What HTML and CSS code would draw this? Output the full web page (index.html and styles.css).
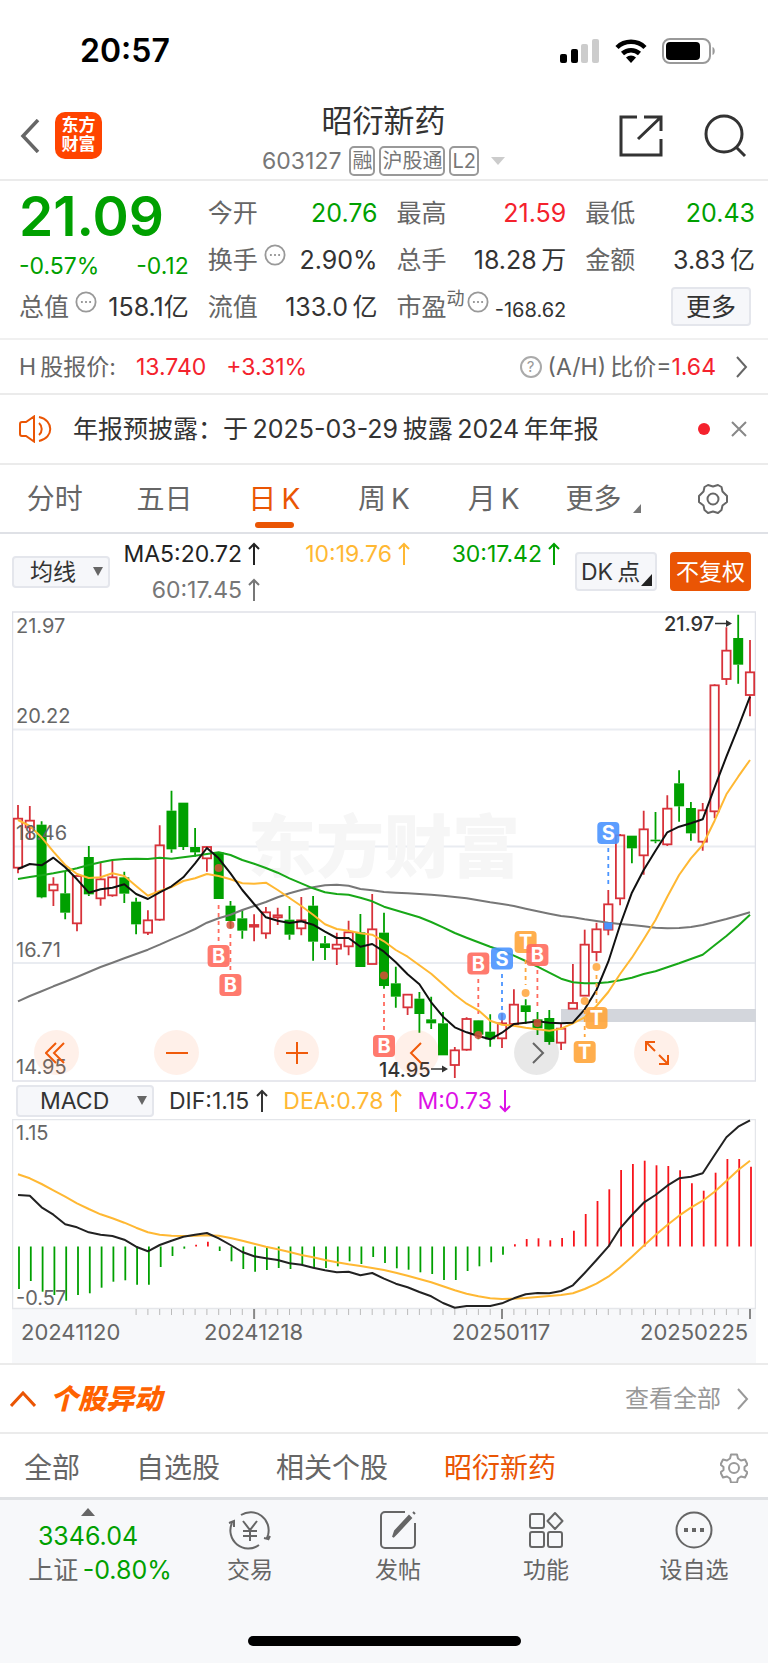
FILE: index.html
```html
<!DOCTYPE html>
<html lang="zh-CN">
<head>
<meta charset="utf-8">
<meta name="viewport" content="width=device-width, initial-scale=1">
<title>昭衍新药 603127</title>
<link rel="stylesheet" href="styles.css">
</head>
<body>
<svg class="defs" aria-hidden="true">
  <symbol id="up" viewBox="0 0 12 24"><path d="M6 23V2M1 7l5-5 5 5"/></symbol>
  <symbol id="down" viewBox="0 0 12 24"><path d="M6 1v21M1 17l5 5 5-5"/></symbol>
  <symbol id="next" viewBox="0 0 14 24"><path d="M2 2l9 10-9 10"/></symbol>
  <symbol id="info" viewBox="0 0 24 24"><circle cx="12" cy="12" r="10.5"/><path d="M6.5 12h2M11 12h2M15.500 12h2" stroke-width="2"/></symbol>
</svg>

<div class="status">
  <span class="clock">20:57</span>
  <span class="status-icons">
    <svg width="40" height="26" viewBox="0 0 40 26"><rect x="0" y="16" width="7" height="9" rx="2"/><rect x="11" y="11" width="7" height="14" rx="2"/><rect x="21" y="6" width="7" height="19" rx="2" fill="#ccc"/><rect x="32" y="1" width="7" height="24" rx="2" fill="#ccc"/></svg>
    <svg width="34" height="26" viewBox="0 0 34 26"><path d="M17 25l-5-5.500a7.500 7.500 0 0 1 10 0z"/><path d="M3 9.500a20 20 0 0 1 28 0M8.500 15.500a12.500 12.500 0 0 1 17 0" fill="none" stroke="#000" stroke-width="4.500"/></svg>
    <svg width="54" height="26" viewBox="0 0 54 26"><rect x="1" y="1" width="47" height="24" rx="7" fill="none" stroke="#999" stroke-width="2"/><rect x="4" y="4" width="34" height="18" rx="4"/><path d="M50.500 9c3 1 3 7 0 8z" fill="#999"/></svg>
  </span>
</div>

<header class="header">
  <div class="header-left">
    <button class="icon-btn" aria-label="返回"><svg width="20" height="34" viewBox="0 0 20 34" fill="none" stroke="#666" stroke-width="3.500"><path d="M18 1L3 17l15 16"/></svg></button>
    <a class="logo" href="#">东方<br>财富</a>
  </div>
  <div class="title-box">
    <h1>昭衍新药</h1>
    <div class="code"><span>603127</span><span class="tag">融</span><span class="tag">沪股通</span><span class="tag">L2</span><i class="caret"></i></div>
  </div>
  <div class="header-right">
    <button class="icon-btn" aria-label="分享"><svg width="44" height="44" viewBox="0 0 44 44" fill="none" stroke="#333" stroke-width="3"><path d="M18 3H2v38h40V25M25 3h17v14M42 3L19 25"/></svg></button>
    <button class="icon-btn" aria-label="搜索"><svg width="44" height="44" viewBox="0 0 44 44" fill="none" stroke="#333" stroke-width="3"><circle cx="21" cy="20" r="18"/><path d="M33 33l9 9"/></svg></button>
  </div>
</header>

<section class="quote">
  <div class="price down">21.09</div>
  <div class="item"><span>今开</span><b class="down">20.76</b></div>
  <div class="item"><span>最高</span><b class="rise">21.59</b></div>
  <div class="item"><span>最低</span><b class="down">20.43</b></div>
  <div class="item change down"><b>-0.57%</b><b>-0.12</b></div>
  <div class="item"><span>换手<svg class="info"><use href="#info"/></svg></span><b>2.90%</b></div>
  <div class="item"><span>总手</span><b>18.28&thinsp;万</b></div>
  <div class="item"><span>金额</span><b>3.83&thinsp;亿</b></div>
  <div class="item"><span>总值<svg class="info"><use href="#info"/></svg></span><b>158.1亿</b></div>
  <div class="item"><span>流值</span><b>133.0&thinsp;亿</b></div>
  <div class="item"><span>市盈<sup>动</sup><svg class="info"><use href="#info"/></svg></span><b class="small">-168.62</b></div>
  <div class="item end"><button class="more">更多</button></div>
</section>

<section class="hshare">
  <span>H&thinsp;股报价:</span><b>13.740</b><b>+3.31%</b>
  <a class="ratio" href="#"><span class="help">?</span><span>(A/H)&thinsp;比价=<em>1.64</em></span><svg class="next"><use href="#next"/></svg></a>
</section>

<section class="notice">
  <svg width="34" height="28" viewBox="0 0 34 28" fill="none" stroke="#ea5504" stroke-width="2"><path d="M15 1.500v25L7 21H3a2 2 0 0 1-2-2V9a2 2 0 0 1 2-2h4zM20 8a8 8 0 0 1 0 12M20 2c15 3 15 21 0 24"/></svg>
  <a href="#">年报预披露：于&thinsp;2025-03-29&thinsp;披露&thinsp;2024&thinsp;年年报</a>
  <i class="dot"></i>
  <button class="icon-btn" aria-label="关闭"><svg width="18" height="18" viewBox="0 0 18 18" fill="none" stroke="#888" stroke-width="2"><path d="M2 2l14 14M16 2L2 16"/></svg></button>
</section>

<nav class="periods">
  <button>分时</button><button>五日</button><button class="active">日&thinsp;K</button><button>周&thinsp;K</button><button>月&thinsp;K</button><button>更多<i class="corner"></i></button>
  <button aria-label="设置"><svg width="32" height="32" viewBox="0 0 32 32" fill="none" stroke="#666" stroke-width="2"><path d="M11 2l5 1.500L21 2l3.500 2 1 4.500L30 13v6l-4.500 3.500-1 4.500L21 30l-5-1.500L11 30l-3.500-3-1-4.500L2 19v-6l4.500-4.500 1-4.500z" stroke-linejoin="round"/><circle cx="16" cy="16" r="5.500"/></svg></button>
</nav>

<section class="legend">
  <button class="pill">均线<i class="tri"></i></button>
  <div class="averages">
    <span>MA5:20.72<svg><use href="#up"/></svg></span>
    <span class="amber">10:19.76<svg><use href="#up"/></svg></span>
    <span class="down">30:17.42<svg><use href="#up"/></svg></span>
    <span class="grey">60:17.45<svg><use href="#up"/></svg></span>
  </div>
  <button class="pill tall">DK&thinsp;点<i class="corner dark"></i></button>
  <button class="solid">不复权</button>
</section>

<section class="chart">
  <svg id="kline" viewBox="12 611 744 471" role="img" aria-label="日K线图"></svg>
  <div class="controls">
    <button aria-label="快退"><svg viewBox="0 0 24 24"><path d="M11 2L1 12l10 10M19 2L9 12l10 10"/></svg></button>
    <button aria-label="缩小"><svg viewBox="0 0 24 24"><path d="M1 12h22"/></svg></button>
    <button aria-label="放大"><svg viewBox="0 0 24 24"><path d="M1 12h22M12 1v22"/></svg></button>
    <button aria-label="左移"><svg viewBox="0 0 24 24"><path d="M16 2L6 12l10 10"/></svg></button>
    <button class="muted" aria-label="右移"><svg viewBox="0 0 24 24"><path d="M8 2l10 10L8 22"/></svg></button>
    <button aria-label="全屏"><svg viewBox="0 0 24 24"><path d="M1 10V1h9M1 1l9 9M23 14v9h-9M23 23l-9-9"/></svg></button>
  </div>
</section>

<section class="macd-head">
  <button class="pill wide">MACD<i class="tri"></i></button>
  <span>DIF:1.15<svg><use href="#up"/></svg></span>
  <span class="amber">DEA:0.78<svg><use href="#up"/></svg></span>
  <span class="magenta">M:0.73<svg><use href="#down"/></svg></span>
</section>
<section class="chart">
  <svg id="macd" viewBox="12 1119 744 244" role="img" aria-label="MACD"></svg>
</section>

<section class="moves">
  <svg width="26" height="16" viewBox="0 0 26 16" fill="none" stroke="#ea5504" stroke-width="3"><path d="M1 15L13 2l12 13"/></svg>
  <h2>个股异动</h2>
  <a href="#">查看全部<svg class="next"><use href="#next"/></svg></a>
</section>
<nav class="filters">
  <button>全部</button><button>自选股</button><button>相关个股</button><button class="active">昭衍新药</button>
  <button class="gear" aria-label="设置"><svg width="28" height="30" viewBox="0 0 28 30" fill="none" stroke="#999" stroke-width="2"><path d="M11 1.500h6l1 4 3 2 4-1 2.500 5-3 2.500v3l3 2.500-2.500 5-4-1-3 2-1 4h-6l-1-4-3-2-4 1-2.500-5 3-2.500v-3l-3-2.500L3 6.500l4 1 3-2z" stroke-linejoin="round"/><circle cx="14" cy="15" r="5"/></svg></button>
</nav>

<footer class="footer">
  <div class="bottom">
    <a class="index" href="#"><i class="tri-up"></i><b class="down">3346.04</b><span>上证&thinsp;<b class="down">-0.80%</b></span></a>
    <a href="#"><svg width="44" height="40" viewBox="0 0 44 40"><path d="M13 5a18 18 0 0 1 27 20l-1 3M40 30l2-4M40 29l-4-1M31 35A18 18 0 0 1 4 13M1 13l5-2v6M15 11l7 9 7-9M22 20v11M15 21h14M15 26h14"/></svg>交易</a>
    <a href="#"><svg width="40" height="40" viewBox="0 0 40 40"><path d="M27 2H7a4 4 0 0 0-4 4v28a4 4 0 0 0 4 4h26a4 4 0 0 0 4-4V13"/><path d="M15 27l2-6L31 6l2 2-14 15zM35 2l2 2" fill="#666"/></svg>发帖</a>
    <a href="#"><svg width="36" height="40" viewBox="0 0 36 40"><rect x="2" y="4" width="14" height="14" rx="2"/><rect x="2" y="22" width="14" height="15" rx="2"/><rect x="20" y="22" width="14" height="15" rx="2"/><path d="M27 3l7.500 8-7.500 8-7.500-8z" stroke-linejoin="round"/></svg>功能</a>
    <a href="#"><svg width="40" height="40" viewBox="0 0 40 40"><circle cx="20" cy="20" r="17.500"/><path d="M10 20h4M18 20h4M26 20h4" stroke-width="4"/></svg>设自选</a>
  </div>
  <div class="home-bar"></div>
</footer>
<script src="app.js"></script>
</body>
</html>
```

FILE: styles.css
```css
* { box-sizing: border-box; }
body { margin: 0; background: #fff; color: #333; font-family: Inter, "Noto Sans CJK SC", sans-serif; font-size: 25px; line-height: 32px; }
h1, h2 { margin: 0; font-weight: 400; }
b { font-weight: 400; }
em, i { font-style: normal; }
a { color: inherit; text-decoration: none; }
button { margin: 0; padding: 0; border: 0; background: none; font: inherit; color: inherit; white-space: nowrap; }
svg { display: block; flex: none; }
use { fill: none; stroke: currentColor; stroke-width: 2; }
.defs { position: absolute; width: 0; height: 0; }
.down { color: #00a000; }
.rise { color: #f4222d; }
.amber { color: #ffb833; }
.grey { color: #777; }
.magenta { color: #dd11e6; }
.icon-btn { display: flex; }

.status { height: 92px; padding: 10px 52px 0 80px; display: flex; align-items: center; justify-content: space-between; }
.clock { font-size: 32px; font-weight: 600; color: #000; }
.status-icons { display: flex; gap: 14px; }

.header { height: 89px; padding: 0 21px 0 20px; display: grid; grid-template-columns: 1fr auto 1fr; align-items: center; border-bottom: 2px solid #ebebeb; }
.header-left { display: flex; align-items: center; gap: 15px; }
.logo { width: 47px; height: 47px; border-radius: 10px; background: #ff4400; color: #fff; font-size: 17px; line-height: 19px; font-weight: 600; padding-top: 4px; text-align: center; }
.title-box { padding-top: 4px; display: flex; flex-direction: column; align-items: center; gap: 2px; }
h1 { font-size: 31px; line-height: 44px; }
.code { display: flex; align-items: center; gap: 4px; font-size: 23px; color: #777; }
.code > span:first-child { margin-right: 4px; }
.tag { height: 30px; padding: 0 1px; border: 2px solid #999; border-radius: 5px; font-size: 20px; line-height: 26px; }
.caret { margin-left: 8px; border: 7px solid transparent; border-top: 8px solid #ccc; border-bottom: 0; }
.header-right { display: flex; justify-content: flex-end; gap: 40px; }

.quote { height: 159px; padding: 8px 13px 0 19px; display: grid; grid-template-columns: repeat(4, 1fr); grid-template-rows: repeat(3, 47px); column-gap: 19px; border-bottom: 2px solid #f0f0f0; align-items: center; }
.price { font-size: 55px; font-weight: 600; line-height: 48px; padding-top: 6px; }
.item { display: flex; align-items: center; justify-content: space-between; white-space: nowrap; }
.item > span { display: flex; align-items: center; color: #666; }
.item.change { font-size: 23px; padding-top: 12px; color: #00a000; }
.info { width: 22px; height: 22px; margin: -10px 0 0 6px; color: #999; }
sup { font-size: 18px; line-height: 20px; margin-top: -16px; }
sup + .info { margin-left: 2px; }
.small { font-size: 20px; padding-top: 6px; }
.item.end { justify-content: flex-end; }
.more { width: 80px; height: 39px; margin-right: 4px; background: #f6f7fa; border: 2px solid #e4e6ec; border-radius: 4px; }

.hshare { height: 55px; padding: 0 19px; display: flex; align-items: center; gap: 20px; border-bottom: 2px solid #ebebeb; font-size: 23px; color: #666; white-space: nowrap; }
.hshare b, .hshare em { color: #f4222d; }
.ratio { margin-left: auto; display: flex; align-items: center; }
.help { width: 22px; height: 22px; margin-right: 6px; border: 2px solid #aaa; border-radius: 50%; font-size: 15px; line-height: 18px; text-align: center; color: #999; }
.next { width: 14px; height: 24px; margin-left: 19px; }

.notice { height: 70px; padding: 0 20px 0 19px; display: flex; align-items: center; border-bottom: 2px solid #ebebeb; }
.notice a { flex: 1; margin-left: 20px; }
.dot { width: 12px; height: 12px; border-radius: 50%; background: #f4222d; margin-right: 20px; }

.periods { height: 69px; display: grid; grid-template-columns: repeat(7, 1fr); border-bottom: 2px solid #dfe1e6; font-size: 28px; color: #666; }
.periods button { position: relative; display: flex; align-items: center; justify-content: center; }
.active, .periods .active { color: #ea5504; }
.periods .active::after { content: ""; position: absolute; bottom: 4px; width: 39px; height: 6px; border-radius: 3px; background: #ea5504; }
.corner { border-left: 8px solid transparent; border-bottom: 9px solid #777; margin: 20px 0 0 12px; }

.legend { height: 77px; padding: 0 17px 2px 12px; display: flex; align-items: center; font-size: 22px; }
.pill { position: relative; width: 98px; height: 32px; display: flex; align-items: center; justify-content: space-between; padding: 0 5px 0 16px; background: #f6f7fa; border: 2px solid #e4e6ec; border-radius: 4px; font-size: 23px; line-height: 28px; }
.tri { border: 5px solid transparent; border-top: 9px solid #666; border-bottom: 0; }
.averages { flex: 1; display: grid; grid-template-columns: repeat(3, 150px); line-height: 36px; font-size: 23px; color: #222; }
.averages span { display: flex; align-items: center; justify-content: flex-end; gap: 6px; }
.averages .amber { color: #ffb833; }
.averages .down { color: #00a000; }
.averages .grey { color: #777; }
.averages svg, .macd-head span svg { width: 12px; height: 24px; }
.pill.tall { width: 82px; height: 39px; padding: 0 4px; }
.corner.dark { position: absolute; right: 3px; bottom: 3px; margin: 0; border-left: 11px solid transparent; border-bottom: 12px solid #222; }
.solid { width: 81px; height: 39px; margin-left: 13px; background: #ea5504; color: #fff; border-radius: 4px; font-size: 23px; }

.chart { position: relative; margin: 0 12px; }
.chart > svg { width: 100%; height: auto; }
.controls { position: absolute; left: 0; right: 0; bottom: 7px; padding: 0 77px 0 22px; display: flex; justify-content: space-between; }
.controls button { width: 45px; height: 45px; border-radius: 50%; background: rgba(255, 110, 40, .1); display: flex; align-items: center; justify-content: center; }
.controls svg { width: 24px; height: 24px; fill: none; stroke: #f05a0a; stroke-width: 2; }
.controls .muted { background: rgba(0, 0, 0, .09); }
.controls .muted svg { stroke: #666; }
.axis { font-size: 20px; fill: #666; }
.date { font-size: 22px; fill: #666; }
.mark { font-size: 20px; font-weight: 500; fill: #333; }
.badge { font-size: 20px; font-weight: 700; fill: #fff; text-anchor: middle; }
.watermark { font-size: 68px; font-weight: 900; fill: #f6f6f6; }

.macd-head { height: 37px; padding: 0 16px; display: flex; align-items: center; gap: 15px; font-size: 23px; }
.macd-head span { display: flex; align-items: center; gap: 7px; }
.pill.wide { width: 138px; padding-left: 22px; }

.moves { height: 71px; padding: 0 18px 0 10px; display: flex; align-items: center; border-top: 2px solid #ebebeb; border-bottom: 2px solid #ebebeb; }
h2 { flex: 1; margin-left: 14px; font-size: 28px; font-weight: 900; font-style: italic; }
h2 { color: #ff6200; }
.moves a { display: flex; align-items: center; font-size: 24px; color: #999; }
.moves .next { margin-left: 15px; }
.filters { height: 66px; padding: 4px 20px 0 24px; display: flex; align-items: center; gap: 56px; border-bottom: 3px solid #dfe1e4; font-size: 28px; color: #666; }
.filters .gear { margin-left: auto; }

.footer { min-height: 165px; background: #f7f8fa; color: #666; }
.bottom { height: 136px; display: grid; grid-template-columns: 176px repeat(4, 1fr); }
.bottom a { padding-top: 10px; display: flex; flex-direction: column; align-items: center; gap: 4px; font-size: 23px; white-space: nowrap; }
.bottom svg { fill: none; stroke: #666; stroke-width: 2; }
.bottom .index { padding-top: 8px; font-size: 25px; gap: 2px; }
.index span { padding-left: 24px; }
.tri-up { border: 7px solid transparent; border-bottom: 8px solid #666; border-top: 0; margin-bottom: 2px; }
.home-bar { width: 273px; height: 10px; margin: 0 auto; border-radius: 5px; background: #000; }
```

FILE: app.js
```js
const RED = '#d7323a', GREEN = '#00a000', STEP = 11.806;
const px = i => (18 + i * STEP).toFixed(1);

// [high, body top, body bottom, low, direction] in thirds of a unit below y = 600
const candles = [
  [615,656,803,820,1],[618,662,682,720,1],[664,674,892,895,0],[832,854,871,918,1],[812,880,938,958,0],[828,828,970,994,1],[738,771,883,888,0],[788,838,895,917,1],[782,832,886,890,1],[815,832,881,909,0],
  [893,905,973,1003,0],[931,961,998,1005,1],[676,736,959,962,1],[572,632,748,758,0],[608,608,741,750,0],[684,741,757,770,0],[738,741,775,815,1],[757,757,897,897,0],[903,917,963,985,0],[930,955,992,1016,0],
  [943,975,980,1024,1],[921,937,1000,1016,1],[923,946,952,975,1],[918,959,1004,1019,0],[891,961,985,1006,1],[888,917,1025,1082,0],[1008,1030,1044,1080,0],[998,1034,1046,1095,1],[962,997,1039,1066,1],[942,997,1101,1101,0],
  [882,988,1092,1092,1],[938,998,1158,1166,0],[1100,1150,1190,1223,0],[1183,1184,1222,1245,1],[1176,1196,1242,1298,0],[1190,1258,1270,1287,0],[1236,1270,1366,1366,0],[1341,1351,1395,1434,1],[1252,1257,1349,1352,1],[1260,1261,1304,1318,0],
  [1243,1295,1318,1340,0],[1240,1270,1315,1344,1],[1168,1214,1272,1275,1],[1198,1216,1236,1272,0],[1236,1258,1285,1305,0],[1230,1254,1326,1334,0],[1270,1286,1328,1350,1],[1092,1209,1226,1226,1],[989,1034,1187,1187,1],[968,988,1056,1084,1],
  [870,913,989,1006,1],[702,706,895,916,1],[707,707,745,790,0],[632,688,766,824,1],[636,719,724,730,0],[586,626,733,738,1],[511,550,619,665,0],[606,624,700,722,0],[609,631,725,752,1],[253,256,634,655,1],
  [82,152,237,255,1],[44,114,194,251,0],[120,217,285,349,1]
];
const ma5 = [807,792,796,773,802,838,878,868,863,853,882,897,877,859,832,790,744,775,820,870,912,952,962,969,964,974,995,1014,1014,1040,1032,1055,1087,1123,1153,1207,1250,1282,1297,1308,1318,1298,1272,1268,1264,1268,1270,1268,1228,1170,1085,975,878,810,752,697,680,670,658,562,470,382,290];
const ma10 = [660,678,712,755,795,822,834,832,820,828,858,887,873,861,843,835,822,828,838,850,851,848,870,894,918,944,973,987,992,1000,1004,1024,1050,1070,1096,1121,1153,1184,1211,1231,1262,1274,1277,1283,1288,1292,1286,1270,1252,1218,1176,1122,1073,1018,960,890,825,775,735,662,583,530,480];
const ma30 = [837,831,826,820,813,805,795,787,780,777,776,777,773,776,772,767,762,757,765,780,791,804,818,835,850,865,877,882,884,893,904,920,931,941,952,966,982,999,1013,1027,1040,1052,1067,1083,1100,1118,1136,1147,1150,1150,1147,1141,1133,1122,1114,1102,1090,1077,1064,1036,1008,977,944];
const ma60 = [1204,1188,1174,1159,1145,1131,1116,1101,1088,1075,1062,1049,1034,1018,1003,987,968,955,944,930,918,906,892,880,870,862,856,854,857,867,871,876,878,880,882,884,887,891,895,901,907,912,918,926,934,941,948,952,958,963,968,972,975,979,983,985,984,981,975,966,957,947,937];
const bars = [627,603,635,645,662,645,640,623,605,601,614,614,561,528,506,494,485,513,544,567,575,570,564,567,554,564,564,559,544,552,531,549,565,569,577,582,600,600,573,559,547,524,493,477,475,481,474,452,402,363,328,270,252,242,256,258,271,310,332,278,237,237,260];
const dif = [345,347,382,404,433,442,457,464,468,479,500,514,495,482,470,464,459,475,495,516,529,535,540,550,554,563,571,577,575,586,579,596,611,622,636,649,669,683,678,678,678,670,655,643,639,640,633,616,579,540,500,445,405,368,345,317,295,290,280,225,172,140,121];
const dea = [283,295,312,331,350,370,387,403,415,428,443,457,464,467,468,467,466,467,474,482,491,500,508,516,525,532,540,547,553,558,564,570,578,587,597,607,619,631,641,649,655,657,656,654,651,648,645,640,627,611,590,562,530,497,465,435,407,383,362,335,303,270,242];

const line = (data, base, color) =>
  `<polyline fill="none" stroke="${color}" stroke-width="2" stroke-linejoin="round" points="${data.map((v, i) => px(i) + ',' + (base + v / 3).toFixed(1)).join(' ')}"/>`;
const text = (cls, x, y, s) => `<text class="${cls}" x="${x}" y="${y}">${s}</text>`;

let k = '<g stroke="#e9ecf1" stroke-width="2"><path d="M12 729.5h744M12 846.5h744M12 963h744"/><rect x="12.5" y="612" width="743" height="469" fill="none" stroke="#dfe1e8" stroke-width="1.5"/></g>';
k += text('watermark', 248, 872, '东方财富');
k += '<rect x="561" y="1009" width="195" height="13" fill="#d3d6dc"/>';
candles.forEach(([h, t, b, l, up], i) => {
  const x = +px(i), Y = v => 600 + v / 3;
  const c = up ? RED : GREEN;
  k += `<path d="M${x} ${Y(h)}V${Y(t)}M${x} ${Y(b)}V${Y(l)}" stroke="${c}" stroke-width="1.800"/>`;
  k += up
    ? `<rect x="${x - 4.2}" y="${Y(t)}" width="8.4" height="${Y(b) - Y(t)}" fill="none" stroke="${c}" stroke-width="1.800"/>`
    : `<rect x="${x - 5}" y="${Y(t)}" width="10" height="${Y(b) - Y(t)}" fill="${c}"/>`;
});
k += line(ma60, 600, '#777') + line(ma30, 600, '#18a818') + line(ma10, 600, '#ffb833') + line(ma5, 600, '#111');
[[633,'21.97'],[723,'20.22'],[840,'18.46'],[957,'16.71'],[1074,'14.95']].forEach(([y, s]) => { k += text('axis', 16, y, s); });

const tone = { B: '#ff6b5e', S: '#4a94ff', T: '#ffa53a' };
// [letter, x, badge centre y, dash from, dash to, dot y]
[['B',218.6,956,905,941,868],['B',230.4,985,934,970,925],['B',384,1046,994,1031,975.5],['B',478.3,963.5,979,1014,1035],['S',502,958.5,974,1010,1016.5],
 ['T',525.6,942,960,985,993],['B',537.4,955,970,1006,1023],['T',584.7,1052,1010,1037,1001],['T',596.500,1018,975,1003,967],['S',608.3,833,848,884,926]]
.forEach(([s, x, y, a, b, d]) => {
  k += `<path d="M${x} ${a}V${b}" stroke="${tone[s]}" stroke-width="1.800" stroke-dasharray="4 4"/>`;
  k += d === 926 ? `<rect x="${x - 4}" y="${d - 3.5}" width="8" height="7" fill="#4a94ff"/>` : `<circle cx="${x}" cy="${d}" r="4" fill="${s === 'B' ? '#d8503a' : tone[s]}" opacity=".85"/>`;
  k += `<rect x="${x - 11}" y="${y - 11}" width="22" height="22" rx="4" fill="${tone[s]}" opacity=".9"/>` + text('badge', x, y + 7, s);
});
k += text('mark', 664, 631, '21.97') + text('mark', 379, 1077, '14.95');
k += '<g stroke="#333" stroke-width="1.500" fill="#333"><path d="M715 623.500h13M431 1069h13"/><path d="M726 620l6 3.500-6 3.500zM442 1065.500l6 3.500-6 3.500z" stroke="none"/></g>';
document.getElementById('kline').innerHTML = k;

let m = '<rect x="12" y="1308" width="744" height="55" fill="#f7f8fa"/><rect x="12.5" y="1119.500" width="743" height="189" fill="none" stroke="#e4e6ea" stroke-width="1.500"/>';
bars.forEach((v, i) => { m += `<path d="M${(+px(i) + 1).toFixed(1)} 1246.500V${(1080 + v / 3).toFixed(1)}" stroke="${v > 499 ? GREEN : '#f8141c'}" stroke-width="1.800"/>`; });
m += text('axis', 16, 1140, '1.15') + text('axis', 16, 1305, '-0.57');
m += line(dea, 1080, '#ffb833') + line(dif, 1080, '#222');
for (let i = 10; i < 63; i++) {
  const major = i === 20 || i === 41 || i === 62;
  m += `<path d="M${px(i)} 1309v${major ? 10 : 6}" stroke="${major ? '#888' : '#bbb'}" stroke-width="${major ? 2 : 1}"/>`;
}
m += text('date', 21, 1340, '20241120') + text('date', 204, 1340, '20241218') + text('date', 452, 1340, '20250117') + text('date', 640, 1340, '20250225');
document.getElementById('macd').innerHTML = m;
```
